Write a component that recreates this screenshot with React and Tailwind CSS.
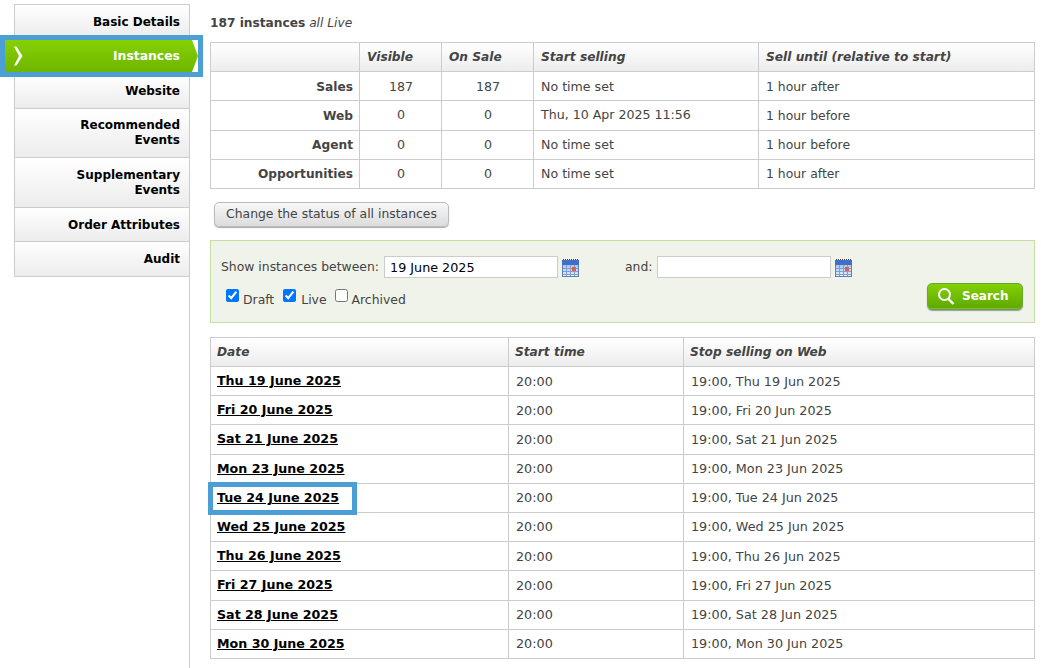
import React from "react";

const sideItems = [
  { label: "Basic Details", h: "h-[33px] pt-[2px]" },
  { label: "Instances", active: true },
  { label: "Website", h: "h-[33px] pb-[1px]" },
  { label: ["Recommended", "Events"], h: "h-[49px]" },
  { label: ["Supplementary", "Events"], h: "h-[50px]" },
  { label: "Order Attributes", h: "h-[34px] pt-[1px]" },
  { label: "Audit", h: "h-[35px]" },
];

const summary = [
  ["Sales", "187", "187", "No time set", "1 hour after"],
  ["Web", "0", "0", "Thu, 10 Apr 2025 11:56", "1 hour before"],
  ["Agent", "0", "0", "No time set", "1 hour before"],
  ["Opportunities", "0", "0", "No time set", "1 hour after"],
];

const instances = [
  ["Thu 19 June 2025", "19:00, Thu 19 Jun 2025"],
  ["Fri 20 June 2025", "19:00, Fri 20 Jun 2025"],
  ["Sat 21 June 2025", "19:00, Sat 21 Jun 2025"],
  ["Mon 23 June 2025", "19:00, Mon 23 Jun 2025"],
  ["Tue 24 June 2025", "19:00, Tue 24 Jun 2025"],
  ["Wed 25 June 2025", "19:00, Wed 25 Jun 2025"],
  ["Thu 26 June 2025", "19:00, Thu 26 Jun 2025"],
  ["Fri 27 June 2025", "19:00, Fri 27 Jun 2025"],
  ["Sat 28 June 2025", "19:00, Sat 28 Jun 2025"],
  ["Mon 30 June 2025", "19:00, Mon 30 Jun 2025"],
];

const CalendarIcon = () => (
  <svg width="17" height="18" viewBox="0 0 17 18" className="block shrink-0">
    <defs>
      <linearGradient id="calBody" x1="0" y1="0" x2="0" y2="1">
        <stop offset="0" stopColor="#a9c4ee" />
        <stop offset="1" stopColor="#e6eefa" />
      </linearGradient>
    </defs>
    <rect x="0" y="1" width="17" height="17" fill="#5f7fb8" />
    <path d="M1 .5h1M3 .5h1M5 .5h1M7 .5h1M9 .5h1M11 .5h1M13 .5h1M15 .5h1" stroke="#444" strokeWidth="1" />
    <rect x="0" y="1" width="17" height="5" fill="#3f6fcb" />
    <rect x="1" y="6" width="15" height="11" fill="url(#calBody)" />
    <path d="M1 9.5h15M1 12.5h15M1 15.5h15M4.5 6v11M8.5 6v11M12.5 6v11" stroke="#7f9fd6" strokeWidth="1" />
    <rect x="10" y="8" width="4" height="4" fill="#e2603f" />
  </svg>
);

const SideItem = ({ item }) => {
  const lines = Array.isArray(item.label) ? item.label : [item.label];
  if (item.active) {
    return (
      <div className="relative z-10 -ml-[10px] -mr-[9px] mt-[2px] mb-[4px] flex h-[32px] items-center justify-end bg-gradient-to-b from-[#86d104] to-[#6fb500] pr-[18px] text-[12.4px] font-bold text-white [clip-path:polygon(0_0,calc(100%-6px)_0,100%_50%,calc(100%-6px)_100%,0_100%)]">
        <svg width="12" height="20" viewBox="0 0 12 20" className="absolute left-[7px] top-[6px]">
          <path d="M2 0.5h2.5L10.5 10 4.5 19.5H2L7 10z" fill="#fff" />
        </svg>
        Instances
      </div>
    );
  }
  return (
    <div className={`flex ${item.h} flex-col justify-center border-b border-[#ccc] bg-gradient-to-b from-white to-[#ececec] pr-[9px] text-right font-bold leading-[15px] text-black`}>
      {lines.map((l) => (
        <div key={l}>{l}</div>
      ))}
    </div>
  );
};

export default function App() {
  return (
    <div className="relative flex h-[668px] w-[1041px] overflow-hidden bg-white font-['DejaVu_Sans',sans-serif] text-[12px] text-[#444]">
      <div className="ml-[14px] mt-[4px] w-[176px] shrink-0 border-r border-[#ccc]">
        <div className="border-l border-t border-[#ccc]">
          {sideItems.map((item, i) => (
            <SideItem key={i} item={item} />
          ))}
        </div>
      </div>

      <div className="ml-[20px] w-[825px] shrink-0">
        <div className="flex h-[42px] items-start pt-[16px] text-[12.2px] leading-[15px]">
          <b>187 instances</b>&nbsp;<i>all Live</i>
        </div>

        <table className="w-[825px] table-fixed border-collapse">
          <colgroup>
            <col className="w-[149px]" />
            <col className="w-[82px]" />
            <col className="w-[92px]" />
            <col className="w-[225px]" />
            <col />
          </colgroup>
          <thead>
            <tr className="h-[29px] bg-gradient-to-b from-white to-[#ececec] text-left text-[12.2px] italic">
              <th className="border border-[#ccc]"></th>
              <th className="border border-[#ccc] px-[7px]">Visible</th>
              <th className="border border-[#ccc] px-[7px]">On Sale</th>
              <th className="border border-[#ccc] px-[7px]">Start selling</th>
              <th className="border border-[#ccc] px-[7px]">Sell until (relative to start)</th>
            </tr>
          </thead>
          <tbody>
            {summary.map((r, i) => {
              const pad = i === 0 ? "pt-[2px]" : "pt-[1px]";
              return (
                <tr key={r[0]} className="h-[29.25px]">
                  <td className={`border border-[#ccc] px-[6px] ${pad} text-right text-[12.2px] font-bold`}>{r[0]}</td>
                  <td className={`border border-[#ccc] ${pad} pl-[1px] text-center text-[12.6px]`}>{r[1]}</td>
                  <td className={`border border-[#ccc] ${pad} pl-[1px] text-center text-[12.6px]`}>{r[2]}</td>
                  <td className={`border border-[#ccc] px-[7px] ${pad} text-[12.6px]`}>{r[3]}</td>
                  <td className={`border border-[#ccc] px-[7px] ${pad} text-[12.4px]`}>{r[4]}</td>
                </tr>
              );
            })}
          </tbody>
        </table>

        <button className="ml-[4px] mt-[13px] block h-[25px] w-[235px] rounded-[5px] border border-[#bbb] bg-gradient-to-b from-[#f8f8f8] to-[#dcdcdc] pb-[1px] text-center text-[12.4px] text-[#444] shadow-[0_1px_1px_#aaa]">
          Change the status of all instances
        </button>

        <div className="mt-[13px] h-[83px] border border-[#c5e09e] bg-[#f0f3e9] px-[10px] pt-[15px]">
          <div className="flex h-[22px] items-center text-[12.4px]">
            <span>Show instances between:</span>
            <input readOnly value="19 June 2025" className="ml-[5px] h-[22px] w-[174px] border border-[#ccc] bg-white px-[5px] pt-[1px] text-[12.75px] text-black outline-none" />
            <span className="ml-[4px] mt-[2px]"><CalendarIcon /></span>
            <span className="ml-[46px]">and:</span>
            <input readOnly value="" className="ml-[4px] h-[22px] w-[174px] border border-[#ccc] bg-white px-[5px] outline-none" />
            <span className="ml-[4px] mt-[2px]"><CalendarIcon /></span>
          </div>
          <div className="flex items-start justify-between">
            <div className="ml-[5px] mt-[11px] flex items-start text-[12.4px]">
              <input type="checkbox" defaultChecked className="m-0 h-[13px] w-[13px]" />
              <span className="ml-[4px] mr-[9px] mt-[3px] leading-[15px]">Draft</span>
              <input type="checkbox" defaultChecked className="m-0 h-[13px] w-[13px]" />
              <span className="ml-[5px] mr-[8px] mt-[3px] leading-[15px]">Live</span>
              <input type="checkbox" className="m-0 h-[13px] w-[13px]" />
              <span className="ml-[4px] mt-[3px] leading-[15px]">Archived</span>
            </div>
            <button className="mt-[5px] mr-[1px] flex h-[27px] w-[96px] items-center rounded-[5px] border border-[#6aa82a] bg-gradient-to-b from-[#84d004] to-[#5da800] pb-[2px] pl-[9px] font-bold text-white shadow-[inset_0_-1px_0_#7db84a,0_1px_1px_#999]">
              <svg width="18" height="20" viewBox="0 0 18 20" className="mr-[7px]">
                <circle cx="7.5" cy="8.5" r="5.5" fill="none" stroke="#fff" strokeWidth="2" />
                <path d="M11.5 13l5 5" stroke="#fff" strokeWidth="2.4" />
              </svg>
              Search
            </button>
          </div>
        </div>

        <table className="mt-[14px] w-[825px] table-fixed border-collapse">
          <colgroup>
            <col className="w-[298px]" />
            <col className="w-[175px]" />
            <col />
          </colgroup>
          <thead>
            <tr className="h-[29px] bg-gradient-to-b from-white to-[#ececec] text-left text-[12.2px] italic">
              <th className="border border-[#ccc] px-[6px]">Date</th>
              <th className="border border-[#ccc] px-[6px]">Start time</th>
              <th className="border border-[#ccc] px-[6px]">Stop selling on Web</th>
            </tr>
          </thead>
          <tbody>
            {instances.map((r) => (
              <tr key={r[0]} className="h-[29.2px]">
                <td className="border border-[#ccc] px-[6px] pt-[1px]">
                  <a href="#" className="text-[12.65px] font-bold text-black underline">{r[0]}</a>
                </td>
                <td className="border border-[#ccc] px-[7px] text-[12.75px]">20:00</td>
                <td className="border border-[#ccc] px-[7px] text-[12.75px]">{r[1]}</td>
              </tr>
            ))}
          </tbody>
        </table>
      </div>

      {/* blue annotation boxes */}
      <div className="pointer-events-none absolute left-0 top-[35px] z-20 h-[42px] w-[203px] border-[5px] border-[#4b9fd5]" />
      <div className="pointer-events-none absolute left-[208px] top-[482px] z-20 h-[33px] w-[149px] border-[5px] border-[#4b9fd5]" />
    </div>
  );
}
